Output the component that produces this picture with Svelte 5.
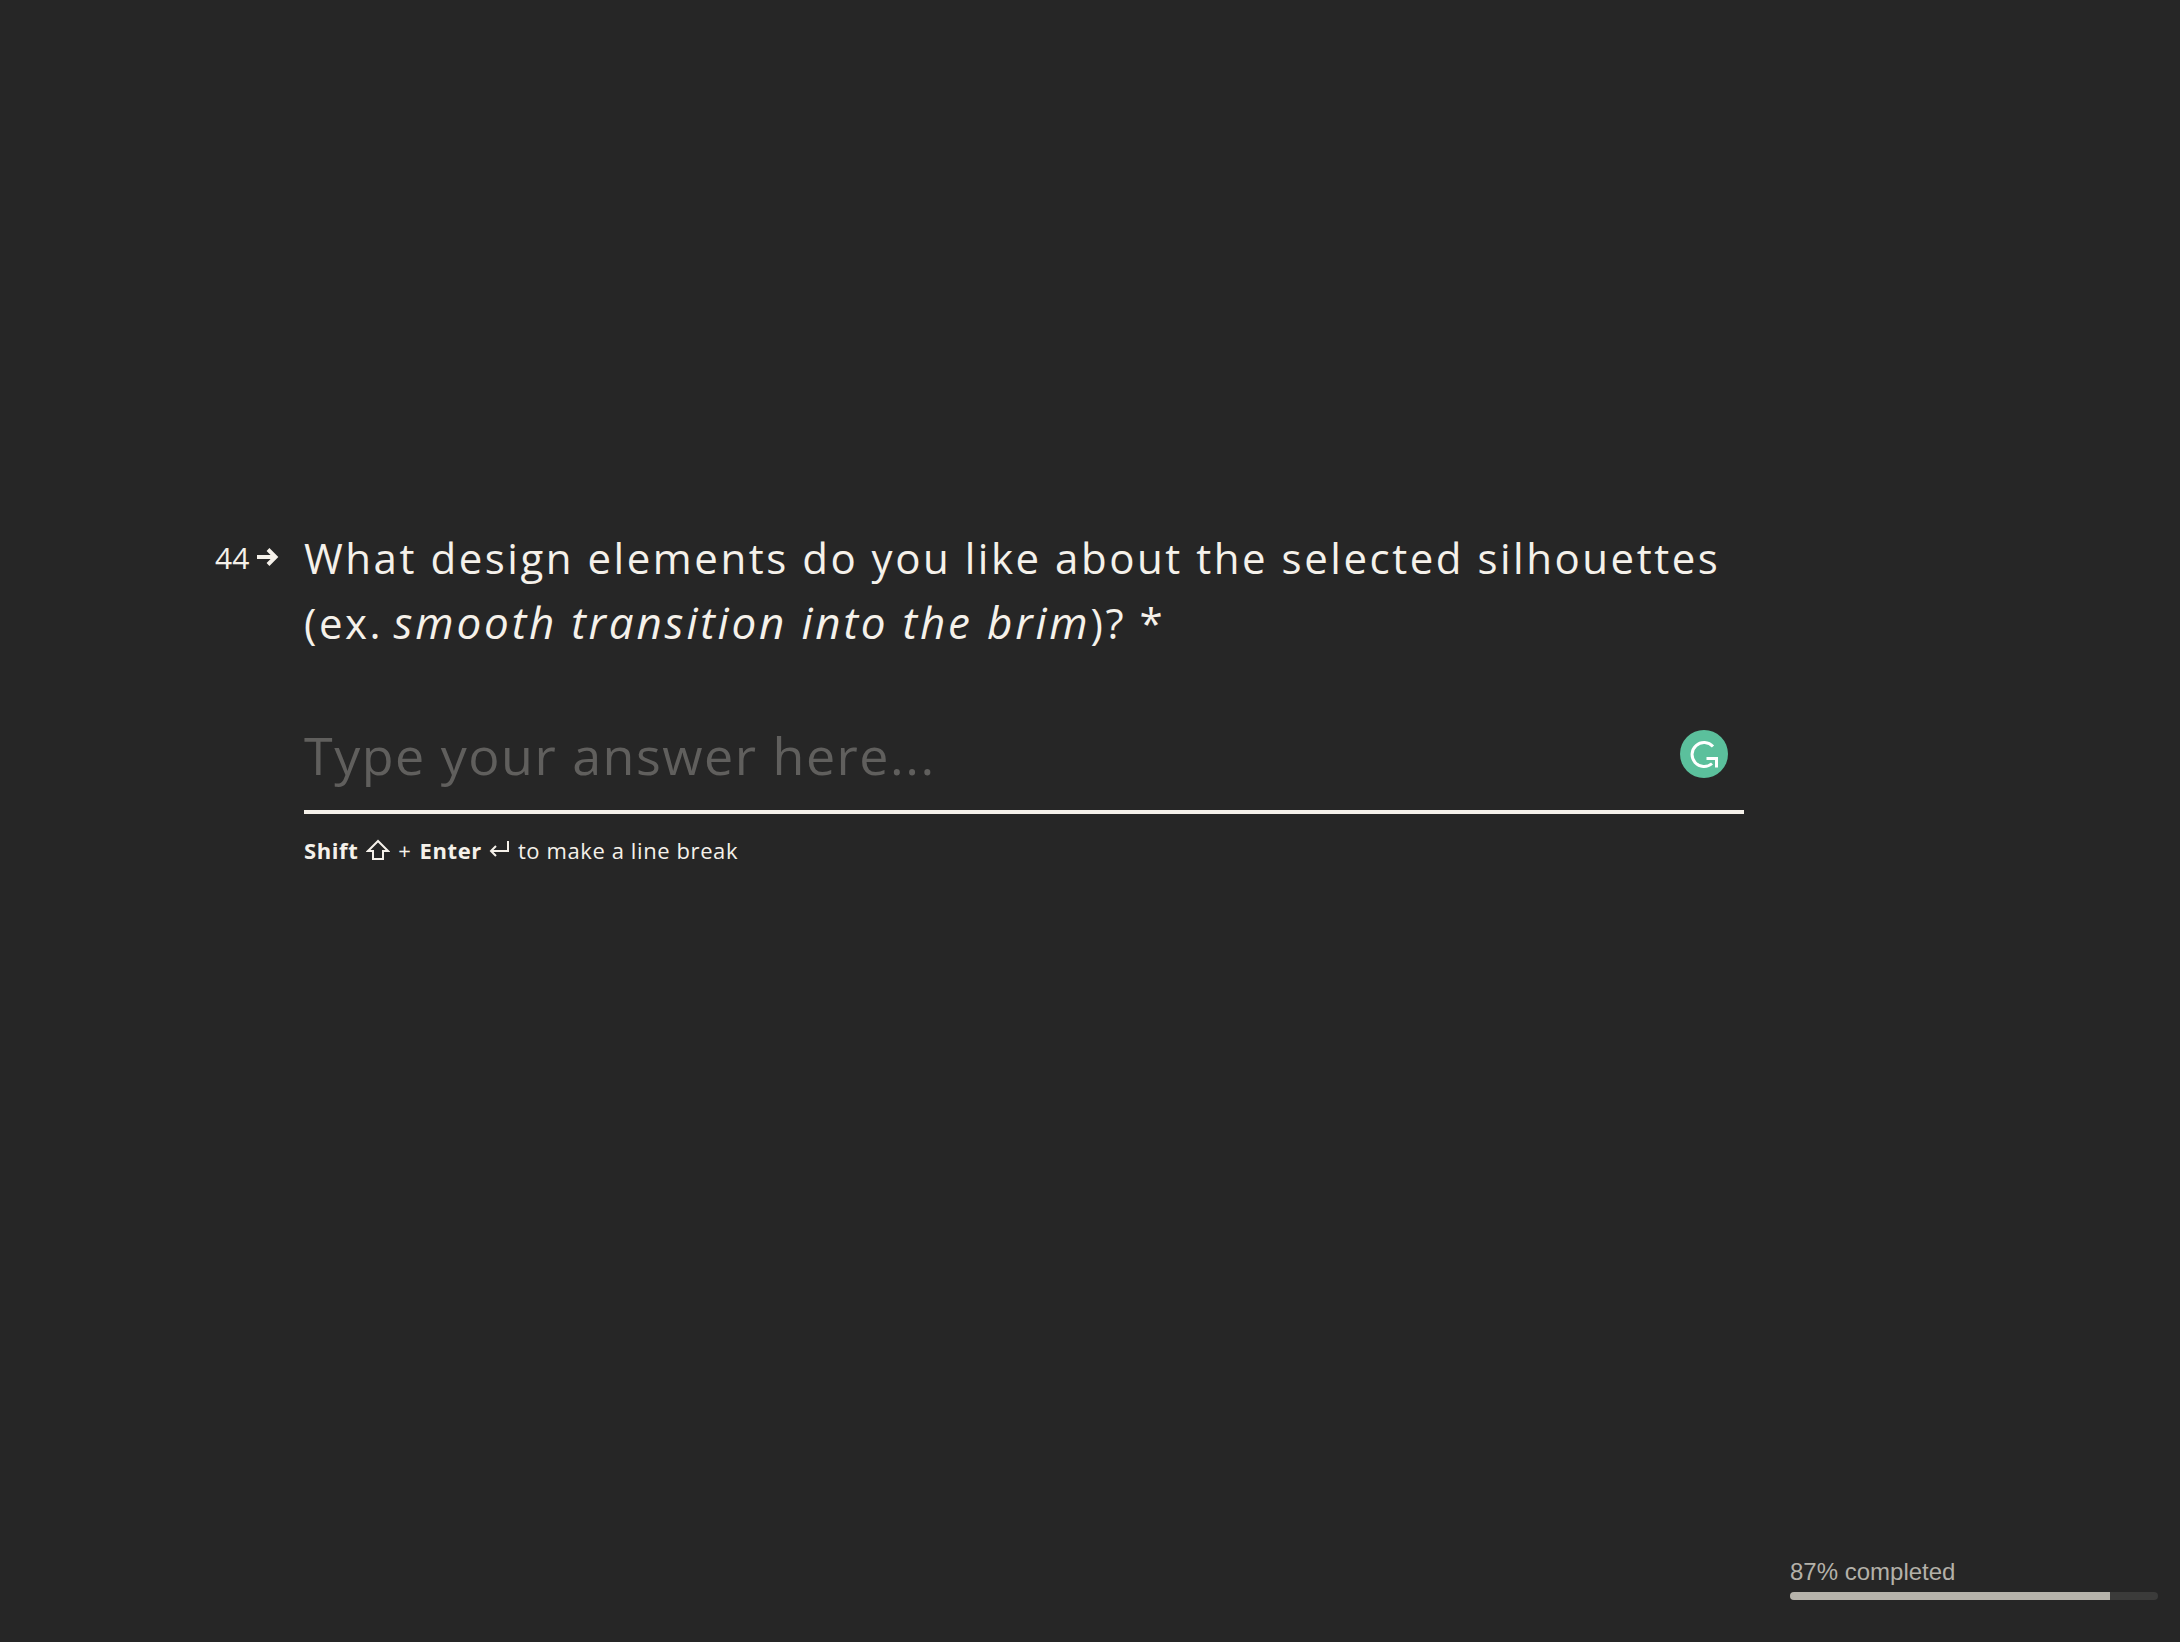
<script>
  let percent = 87;
  let answer = "";
</script>

<main>
  <section class="question">
    <div class="number">
      <span>44</span>
      <svg class="arrow" width="24" height="22" viewBox="0 0 24 22">
        <path d="M1 11h19M12 3.500l7.500 7.500-7.500 7.500" fill="none" stroke="#f5f1ea" stroke-width="4" />
      </svg>
    </div>
    <div class="body">
      <h1>What design elements do you like about the selected silhouettes<br />(ex. <em>smooth transition into the brim</em>)? *</h1>
      <div class="field">
        <input type="text" bind:value={answer} placeholder="Type your answer here..." />
        <svg class="grammarly" width="48" height="48" viewBox="0 0 48 48">
          <circle cx="24" cy="24" r="24" fill="#5bc09c" />
          <path d="M33 16.500a12 12 0 1 0-1 17" fill="none" stroke="#fff" stroke-width="3" />
          <path d="M26.500 28.500h10v9" fill="none" stroke="#fff" stroke-width="3" />
        </svg>
      </div>
      <p class="hint">
        <b>Shift</b>
        <svg width="24" height="22" viewBox="0 0 24 22"><path d="M12 2 2 12h5v8h10v-8h5z" fill="none" stroke="#f5f1ea" stroke-width="2" /></svg>
        <span>+</span>
        <b>Enter</b>
        <svg class="enter" width="22" height="20" viewBox="0 0 22 20"><path d="M20 1v10H3M8 6l-5 5 5 5" fill="none" stroke="#f5f1ea" stroke-width="2" /></svg>
        <span>to make a line break</span>
      </p>
    </div>
  </section>

  <aside class="progress">
    <div class="label">{percent}% completed</div>
    <div class="track"><div class="fill" style="width: {percent}%"></div></div>
  </aside>
</main>

<style>
  :global(body) {
    margin: 0;
    background: #262626;
  }

  main {
    position: relative;
    height: 1642px;
    background: #262626;
    color: #f5f1ea;
    font-family: "Open Sans", sans-serif;
    overflow: hidden;
    padding-top: 526px;
    box-sizing: border-box;
  }

  .question {
    display: flex;
    padding-left: 215px;
    width: 1744px;
    box-sizing: border-box;
  }

  .number {
    width: 89px;
    flex: none;
    display: flex;
    align-items: center;
    gap: 7px;
    height: 62px;
    font-size: 30px;
    font-weight: 400;
  }

  .body {
    flex: 1;
  }

  h1 {
    margin: 0;
    font-size: 42px;
    line-height: 64px;
    font-weight: 400;
    letter-spacing: 2.53px;
    white-space: nowrap;
  }

  em {
    font-size: 44px;
    letter-spacing: 2.8px;
    margin-left: -3px;
  }

  .field {
    position: relative;
    margin-top: 48px;
    border-bottom: 4px solid #f5f1ea;
    height: 107px;
  }

  input {
    width: 100%;
    height: 100%;
    box-sizing: border-box;
    padding: 0 0 4px;
    border: none;
    outline: none;
    background: transparent;
    color: #f5f1ea;
    font: 400 52px "Open Sans", sans-serif;
    letter-spacing: 1.5px;
  }

  input::placeholder {
    color: #605f5d;
    opacity: 1;
  }

  .grammarly {
    position: absolute;
    right: 16px;
    top: 27px;
  }

  .hint {
    margin: 21px 0 0;
    display: flex;
    align-items: center;
    gap: 8px;
    font-size: 22px;
    line-height: 30px;
    font-weight: 400;
    letter-spacing: 0.6px;
  }

  .hint b {
    font-weight: 700;
    letter-spacing: 0.6px;
  }

  .enter {
    margin-left: -2px;
  }

  .progress {
    position: absolute;
    left: 1790px;
    top: 1557px;
    width: 368px;
    font-family: "Liberation Sans", sans-serif;
    font-size: 24px;
    color: #b4b1a9;
  }

  .label {
    line-height: 30px;
    margin-bottom: 5px;
  }

  .track {
    height: 8px;
    border-radius: 4px;
    background: #3b3b3a;
    overflow: hidden;
  }

  .fill {
    height: 100%;
    background: #b6b3ab;
  }
</style>
